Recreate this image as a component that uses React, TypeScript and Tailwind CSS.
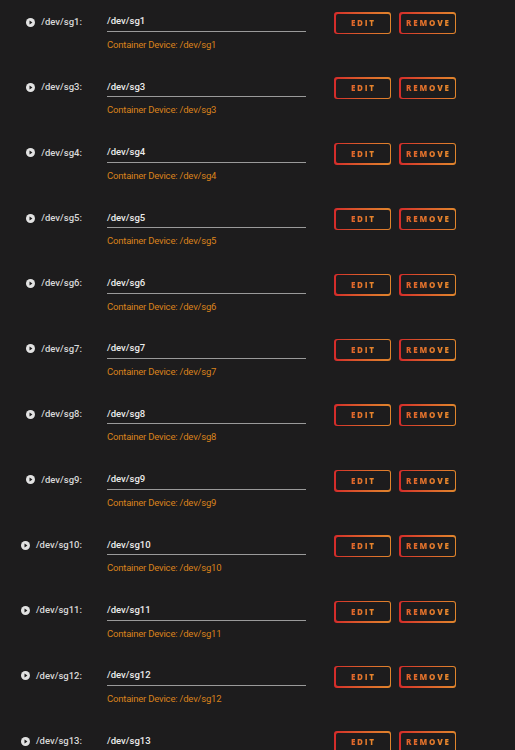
import React from 'react'

const devices = ['sg1', 'sg3', 'sg4', 'sg5', 'sg6', 'sg7', 'sg8', 'sg9', 'sg10', 'sg11', 'sg12', 'sg13']

function PlayIcon() {
  return (
    <svg width="9" height="9" viewBox="0 0 10 10" className="shrink-0">
      <circle cx="5" cy="5" r="5" fill="#e2e2e2" />
      <path d="M3.9 2.8 L7.1 5 L3.9 7.2 Z" fill="#1d1c1d" />
    </svg>
  )
}

function GradientButton({ label }: { label: string }) {
  return (
    <div className="w-[57px] h-[22px] rounded-[3px] p-[1.5px] bg-gradient-to-r from-[#d42a2a] to-[#e0852c]">
      <div className="w-full h-full rounded-[2px] bg-[#1d1c1d] flex items-center justify-center">
        <span className="text-[8px] font-extrabold tracking-[1.8px] pl-[1.8px] bg-gradient-to-r from-[#e0602b] to-[#e88a2c] bg-clip-text text-transparent font-['Open_Sans',sans-serif]">
          {label}
        </span>
      </div>
    </div>
  )
}

export default function App() {
  return (
    <div className="h-screen overflow-hidden bg-[#1d1c1d] pt-[12px] font-['Roboto',sans-serif]">
      {devices.map((d) => (
        <div key={d} className="flex items-start h-[65.4px]">
          {/* Host path label */}
          <div className="w-[82px] h-[20px] flex items-center justify-end gap-[6px] text-[9.5px] font-medium text-[#d8d8d8]">
            <PlayIcon />
            <span>/dev/{d}:</span>
          </div>

          {/* Field */}
          <div className="ml-[25px] w-[199px]">
            <div className="h-[20px] border-b border-[#9a9a9a] flex items-center text-[9.5px] font-medium text-[#ececec]">
              /dev/{d}
            </div>
            <div className="mt-[7px] text-[9.5px] leading-[12px] tracking-[-0.2px] text-[#d9821c]">
              Container Device: /dev/{d}
            </div>
          </div>

          {/* Actions */}
          <div className="ml-[28px] flex gap-[8px]">
            <GradientButton label="EDIT" />
            <GradientButton label="REMOVE" />
          </div>
        </div>
      ))}
    </div>
  )
}
